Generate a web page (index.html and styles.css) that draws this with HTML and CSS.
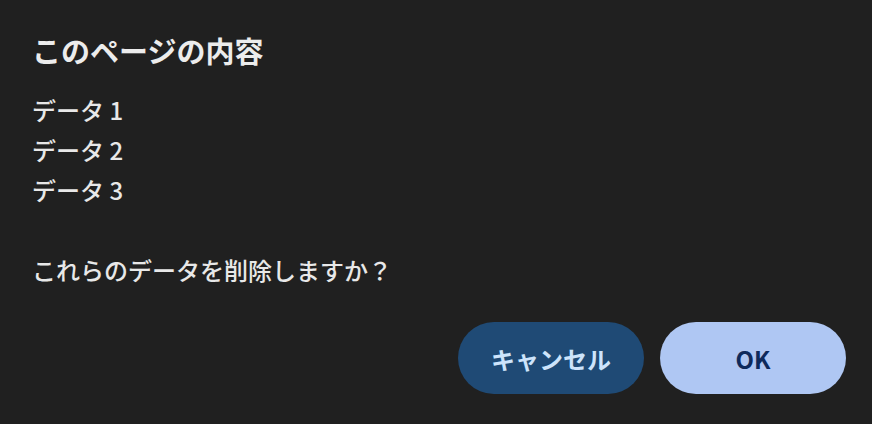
FILE: index.html
```html
<!DOCTYPE html>
<html lang="ja">
<head>
<meta charset="utf-8">
<link rel="stylesheet" href="styles.css">
</head>
<body>
<div class="dialog">
  <h1 class="title">このページの内容</h1>
  <div class="content">
    <div class="line">データ 1</div>
    <div class="line">データ 2</div>
    <div class="line">データ 3</div>
    <div class="line"></div>
    <div class="line">これらのデータを削除しますか？</div>
  </div>
  <div class="actions">
    <button class="btn btn-cancel">キャンセル</button>
    <button class="btn btn-ok">OK</button>
  </div>
</div>
</body>
</html>
```
FILE: styles.css
```css
html, body {
  margin: 0;
  padding: 0;
  background: #202020;
}
body {
  width: 872px;
  height: 424px;
  font-family: "Noto Sans CJK JP", "Noto Sans", sans-serif;
  color: #e8e8e8;
}
.dialog {
  padding: 24px 26px 30px 32px;
  display: flex;
  flex-direction: column;
}
.title {
  margin: 0;
  font-size: 29px;
  font-weight: 600;
  line-height: 52px;
  color: #ececec;
}
.content {
  margin-top: 14px;
  font-size: 24px;
  font-weight: 500;
}
.line {
  height: 40px;
  line-height: 40px;
}
.actions {
  margin-top: 32px;
  display: flex;
  justify-content: flex-end;
  gap: 16px;
}
.btn {
  width: 186px;
  height: 72px;
  border: none;
  border-radius: 36px;
  font-family: "Noto Sans CJK JP", "Noto Sans", sans-serif;
  font-size: 24px;
  font-weight: 600;
  padding: 0;
}
.btn-cancel {
  background: #1f4a75;
  color: #cde4fb;
}
.btn-ok {
  background: #afc7f3;
  color: #0e2a5c;
}
```
